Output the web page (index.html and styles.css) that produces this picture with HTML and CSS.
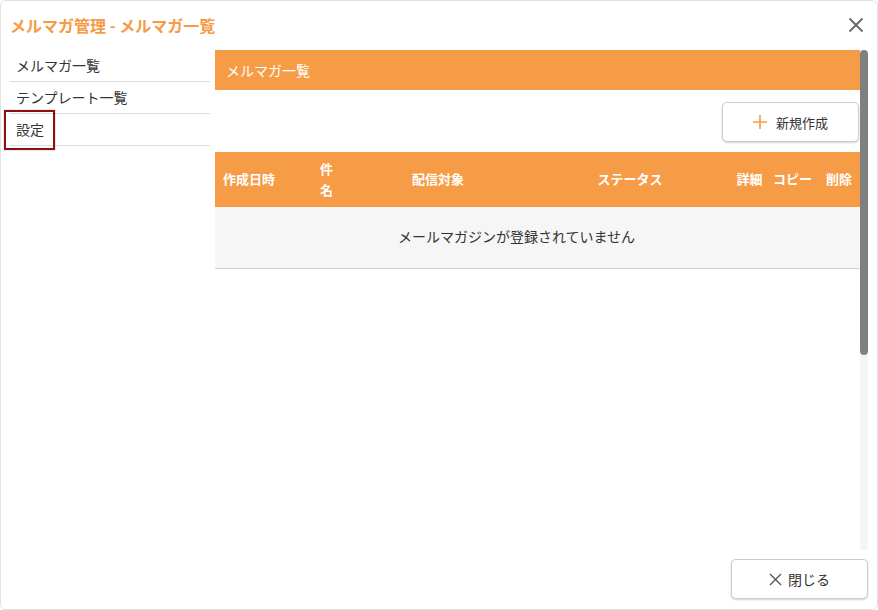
FILE: index.html
```html
<!DOCTYPE html>
<html lang="ja">
<head>
<meta charset="utf-8">
<link rel="stylesheet" href="styles.css">
</head>
<body>
<div class="dialog">
  <div class="dlg-head">
    <div class="dlg-title">メルマガ管理 - メルマガ一覧</div>
    <button class="dlg-close" aria-label="close">
      <svg width="16" height="16" viewBox="0 0 16 16"><path d="M1.5 1.5 L14.5 14.5 M14.5 1.5 L1.5 14.5" stroke="#666" stroke-width="1.8" fill="none"/></svg>
    </button>
  </div>
  <div class="dlg-body">
    <ul class="side">
      <li class="side-item">メルマガ一覧</li>
      <li class="side-item">テンプレート一覧</li>
      <li class="side-item focused">設定<span class="focus-ring"></span></li>
    </ul>
    <div class="main">
      <div class="main-inner">
        <div class="section-bar">メルマガ一覧</div>
        <div class="toolbar">
          <button class="btn">
            <svg width="14" height="14" viewBox="0 0 14 14"><path d="M7 0 V14 M0 7 H14" stroke="#f59b45" stroke-width="1.6" fill="none"/></svg>
            <span>新規作成</span>
          </button>
        </div>
        <table class="grid">
          <colgroup>
            <col class="c-date"><col class="c-name"><col class="c-target"><col class="c-status"><col class="c-detail"><col class="c-copy"><col class="c-del">
          </colgroup>
          <thead>
            <tr>
              <th class="left">作成日時</th>
              <th class="left">件名</th>
              <th>配信対象</th>
              <th>ステータス</th>
              <th>詳細</th>
              <th>コピー</th>
              <th>削除</th>
            </tr>
          </thead>
          <tbody>
            <tr class="empty">
              <td colspan="6">メールマガジンが登録されていません</td>
              <td></td>
            </tr>
          </tbody>
        </table>
      </div>
      <div class="scrollbar"><div class="scroll-thumb"></div></div>
    </div>
  </div>
  <div class="dlg-foot">
    <button class="btn">
      <svg width="13" height="13" viewBox="0 0 13 13"><path d="M1 1 L12 12 M12 1 L1 12" stroke="#555" stroke-width="1.4" fill="none"/></svg>
      <span>閉じる</span>
    </button>
  </div>
</div>
</body>
</html>
```
FILE: styles.css
```css
* { box-sizing: border-box; }
html, body { margin: 0; padding: 0; background: #fff; }
body {
  font-family: "Noto Sans CJK JP", "Noto Sans", "Liberation Sans", sans-serif;
  color: #333;
  width: 878px;
  height: 610px;
  overflow: hidden;
}
.dialog {
  width: 878px;
  height: 610px;
  border: 1px solid #e2e2e2;
  border-radius: 6px;
  display: flex;
  flex-direction: column;
  background: #fff;
}
.dlg-head {
  height: 49px;
  display: flex;
  align-items: center;
  justify-content: space-between;
  padding: 0 13px 1px 9px;
}
.dlg-title {
  color: #f59b45;
  font-weight: bold;
  font-size: 16px;
  letter-spacing: 0;
}
.dlg-close {
  border: 0;
  background: none;
  padding: 0;
  width: 16px;
  height: 16px;
  display: flex;
}
.dlg-body {
  display: flex;
  height: 500px;
  padding-left: 9px;
  gap: 5px;
}
.side {
  list-style: none;
  margin: 0;
  padding: 0;
  width: 200px;
}
.side-item {
  position: relative;
  height: 32px;
  line-height: 31px;
  font-size: 14px;
  padding-left: 6px;
  border-bottom: 1px solid #ddd;
}
.focus-ring {
  position: absolute;
  left: -6px;
  top: -4px;
  width: 51px;
  height: 40px;
  border: 2px solid #8e0f0f;
  box-shadow: 0 0 1px rgba(142,15,15,0.6);
}
.main {
  width: 653px;
  height: 500px;
  display: flex;
  overflow: hidden;
}
.main-inner {
  width: 645px;
}
.scrollbar {
  width: 8px;
  height: 500px;
  background: #f5f5f5;
  border-radius: 4px;
}
.scroll-thumb {
  height: 305px;
  background: #808080;
  border-radius: 4px;
}
.section-bar {
  height: 40px;
  background: #f69c46;
  color: #fff;
  font-size: 14px;
  line-height: 40px;
  padding-left: 11px;
}
.toolbar {
  display: flex;
  justify-content: flex-end;
  padding: 12px 1px 10px 0;
}
.btn {
  width: 137px;
  height: 40px;
  background: #fff;
  border: 1px solid #ccc;
  border-radius: 5px;
  box-shadow: 0 1px 2px rgba(0,0,0,0.18);
  display: flex;
  align-items: center;
  justify-content: center;
  gap: 9px;
  font-family: inherit;
  font-size: 13px;
  color: #333;
  padding: 0;
}
.grid {
  width: 645px;
  border-collapse: collapse;
  table-layout: fixed;
}
.c-date { width: 97px; }
.c-name { width: 36px; }
.c-target { width: 180px; }
.c-status { width: 204px; }
.c-detail { width: 35px; }
.c-copy { width: 51px; }
.c-del { width: 42px; }
.grid th {
  background: #f69c46;
  color: #fff;
  font-weight: bold;
  font-size: 13px;
  height: 55px;
  line-height: 21px;
  padding: 0 0 2px 0;
  text-align: center;
  white-space: normal;
}
.grid th.left {
  text-align: left;
  padding: 0 8px 2px 8px;
}
.grid .empty td {
  background: #f6f6f6;
  height: 61px;
  border-bottom: 1px solid #d2d2d2;
  text-align: center;
  font-size: 14px;
  color: #333;
  padding: 0 0 2px 0;
}
.dlg-foot {
  flex: 1;
  display: flex;
  justify-content: flex-end;
  align-items: flex-start;
  padding: 9px 9px 0 0;
}
.dlg-foot .btn { gap: 6px; font-size: 14px; }
```
